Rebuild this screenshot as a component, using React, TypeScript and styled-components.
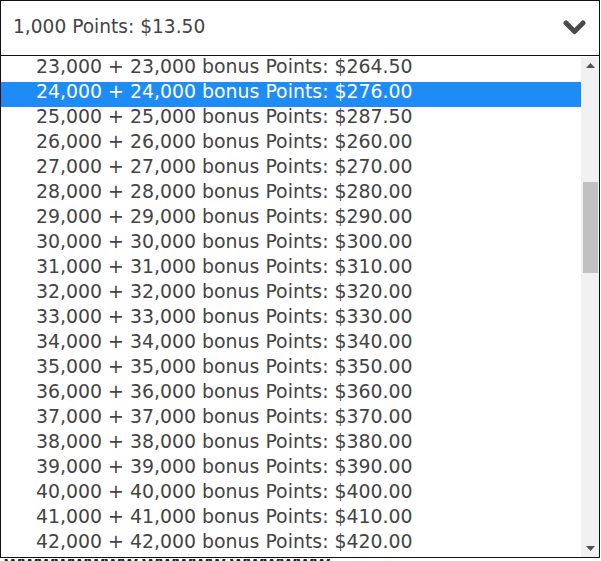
import React from "react";
import styled, { createGlobalStyle } from "styled-components";

const Global = createGlobalStyle`
  html, body { margin: 0; padding: 0; background: #fff; }
  body { font-family: "DejaVu Sans", sans-serif; }
`;

const Page = styled.div`
  width: 601px;
  height: 561px;
  overflow: hidden;
  background: #fff;
`;

const SelectBox = styled.div`
  box-sizing: border-box;
  width: 600px;
  height: 56px;
  border: 1px solid #111;
  display: flex;
  align-items: center;
  justify-content: space-between;
  padding: 0 13px 0 12px;
  color: #444;
  font-size: 18.6px;
  line-height: 22px;
`;

const SelectLabel = styled.span`
  padding-bottom: 2px;
`;

const Popup = styled.div`
  box-sizing: border-box;
  width: 600px;
  height: 502px;
  border: 1px solid #111;
  border-top: none;
  padding-top: 1px;
  display: flex;
`;

const List = styled.ul`
  list-style: none;
  margin: 0;
  padding: 0;
  flex: 1;
`;

const Option = styled.li<{ $active?: boolean }>`
  box-sizing: border-box;
  height: 25px;
  padding: 0 0 0 35px;
  font-size: 18.9px;
  line-height: 19px;
  white-space: nowrap;
  color: ${(p) => (p.$active ? "#fff" : "#444")};
  background: ${(p) => (p.$active ? "#1e8bf7" : "transparent")};
`;

const Scrollbar = styled.div`
  width: 18px;
  background: #f1f1f1;
  display: flex;
  flex-direction: column;
  align-items: stretch;
`;

const ArrowButton = styled.div`
  height: 17px;
  display: flex;
  align-items: center;
  justify-content: center;
`;

const Track = styled.div`
  flex: 1;
  display: flex;
  flex-direction: column;
  padding: 0 1px 0 2px;
`;

const Thumb = styled.div`
  height: 91px;
  background: #c1c1c1;
`;

const Behind = styled.div`
  font-family: "DejaVu Sans", sans-serif;
  font-weight: bold;
  font-size: 16px;
  line-height: 16px;
  color: #222;
  white-space: nowrap;
  padding-left: 4px;
  letter-spacing: -1px;
`;

const rows = Array.from({ length: 20 }, (_, i) => 23 + i);
const price = (k: number) => {
  if (k === 23) return "264.50";
  if (k === 24) return "276.00";
  if (k === 25) return "287.50";
  return `${k * 10}.00`;
};

const Chevron = () => (
  <svg width="23" height="16" viewBox="0 0 23 16">
    <polyline
      points="3,3 11.5,11.5 20,3"
      fill="none"
      stroke="#4a4a4a"
      strokeWidth="5"
      strokeLinecap="round"
      strokeLinejoin="round"
    />
  </svg>
);

const Tri = ({ up }: { up?: boolean }) => (
  <svg width="9" height="5" viewBox="0 0 9 5">
    <polygon points={up ? "0,5 4.5,0 9,5" : "0,0 4.5,5 9,0"} fill="#505050" />
  </svg>
);

export default function App() {
  return (
    <Page>
      <Global />
      <SelectBox>
        <SelectLabel>1,000 Points: $13.50</SelectLabel>
        <Chevron />
      </SelectBox>
      <Popup>
        <List>
          {rows.map((k) => (
            <Option key={k} $active={k === 24}>
              {`${k},000 + ${k},000 bonus Points: $${price(k)}`}
            </Option>
          ))}
        </List>
        <Scrollbar>
          <ArrowButton>
            <Tri up />
          </ArrowButton>
          <Track>
            <div style={{ height: 108 }} />
            <Thumb />
          </Track>
          <ArrowButton>
            <Tri />
          </ArrowButton>
        </Scrollbar>
      </Popup>
      <Behind>WWWWWWWW WWWWW WWWWWW</Behind>
    </Page>
  );
}
